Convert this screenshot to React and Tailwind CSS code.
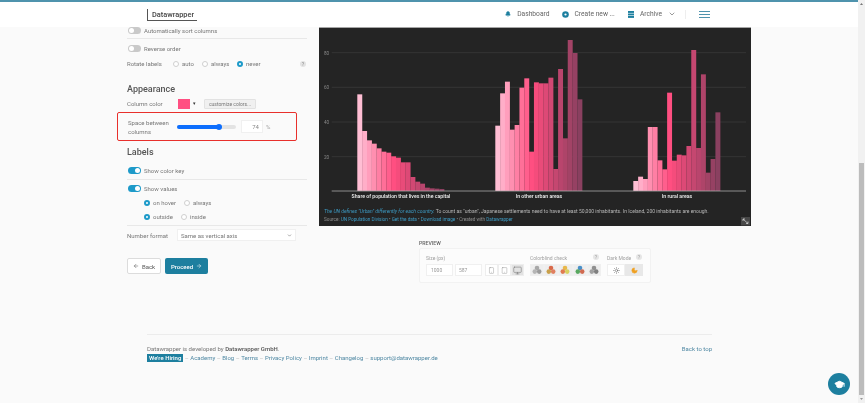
import React from "react";
import { ChevronDown, ArrowLeft, ArrowRight, Smartphone, Tablet, Monitor, Sun, Moon, GraduationCap, Bell } from "lucide-react";

const g1 = [208,318,346,356,370,380,383,394,398,412,412,456,470,476,488,490,491,492];
const g2 = [302,205,170,314,300,188,160,380,172,175,175,158,432,132,340,45,84,223];
const g3 = [468,455,462,306,306,406,433,203,407,389,391,363,75,369,148,443,402,262];

function mix(a, b, t) {
  return a.map((v, i) => Math.round(v + (b[i] - v) * t));
}
function color(i) {
  const t = i / 17;
  const c = t < 0.42 ? mix([255, 190, 212], [255, 77, 127], t / 0.42) : mix([255, 77, 127], [138, 64, 96], (t - 0.42) / 0.58);
  return `rgb(${c[0]},${c[1]},${c[2]})`;
}

function Group({ data, x0 }) {
  return data.map((top, i) => {
    const y = 25 + top / 3 - 27;
    return <rect key={i} x={x0 + i * 4.83} y={y} width={4.95} height={164 - y} fill={color(i)} />;
  });
}

function Chart() {
  return (
    <svg viewBox="0 0 432 199" className="block w-[432px] h-[199px]">
      <rect x="0" y="0" width="432" height="0.9" fill="#b5b5b5" />
      {[[25.7, "80"], [60.3, "60"], [95, "40"], [129.7, "20"]].map(([y, l]) => (
        <g key={l}>
          <line x1="12.7" x2="427" y1={y} y2={y} stroke="#3a3a3a" strokeWidth="0.8" />
          <text x="5" y={y + 2} fontSize="4.6" fill="#8a8a8a" fontFamily="Roboto, sans-serif">{l}</text>
        </g>
      ))}
      <Group data={g1} x0={38.3} />
      <Group data={g2} x0={176.3} />
      <Group data={g3} x0={314.3} />
      <line x1="12.7" x2="427" y1="164" y2="164" stroke="#aaaaaa" strokeWidth="0.8" />
      <g fontFamily="Roboto, sans-serif" fontSize="5.2" fontWeight="500" fill="#f0f0f0" textAnchor="middle">
        <text x="82" y="171">Share of population that lives in the capital</text>
        <text x="220" y="171">In other urban areas</text>
        <text x="358" y="171">In rural areas</text>
      </g>
      <text x="5" y="186" fontSize="5.02" fontFamily="Roboto, sans-serif" fill="#b8b8b8">
        <tspan fill="#3d9bc4" fontStyle="italic">The UN defines "Urban" differently for each country.</tspan>
        <tspan> To count as "urban", Japanese settlements need to have at least 50,000 inhabitants. In Iceland, 200 inhabitants are enough.</tspan>
      </text>
      <text x="5" y="194" fontSize="4.65" fontFamily="Roboto, sans-serif" fill="#8f8f8f">
        Source: <tspan fill="#3d9bc4">UN Population Division</tspan> • <tspan fill="#3d9bc4">Get the data</tspan> • <tspan fill="#3d9bc4">Download image</tspan> • Created with <tspan fill="#3d9bc4">Datawrapper</tspan>
      </text>
      <rect x="422" y="190" width="9" height="8.5" fill="#484848" />
      <path d="M424 192l5 4.5M424 192h2M424 192v2M429 196.500h-2M429 196.500v-2" stroke="#dddddd" strokeWidth="0.7" fill="none" />
    </svg>
  );
}

function Toggle({ on }) {
  return (
    <span className={`relative inline-block w-[13px] h-[7px] rounded-full shrink-0 ${on ? "bg-[#1d9ac9]" : "bg-[#c9c9c9]"}`}>
      <span className={`absolute top-[1px] w-[5px] h-[5px] rounded-full bg-white ${on ? "right-[1px]" : "left-[1px]"}`} />
    </span>
  );
}

function Radio({ on, label, w }) {
  return (
    <span className={`flex items-center gap-[3px] ${w}`}>
      <span className={`w-[6px] h-[6px] rounded-full shrink-0 bg-white ${on ? "border-[2px] border-[#1d9ac9]" : "border border-[#cfcfcf]"}`} />
      <span>{label}</span>
    </span>
  );
}

function Divider() {
  return <div className="h-px bg-[#e8e8e8]" />;
}

function Sidebar() {
  return (
    <div className="w-[180px] ml-[127px] text-[6px] leading-[9px] text-[#777777]">
      <div className="flex items-center gap-[3px] h-[9px] pl-px -mt-[1px]"><Toggle /><span>Automatically sort columns</span></div>
      <div className="mt-[3px]"><Divider /></div>
      <div className="flex items-center gap-[3px] h-[9px] pl-px mt-[5px]"><Toggle /><span>Reverse order</span></div>
      <div className="flex items-center h-[9px] mt-[6px]">
        <span className="w-[46px]">Rotate labels</span>
        <Radio label="auto" w="w-[29px]" />
        <Radio label="always" w="w-[35px]" />
        <Radio on label="never" w="w-[63px]" />
        <span className="w-[6px] h-[6px] rounded-full bg-[#e3e3e3] text-[5px] leading-[6px] text-center text-[#8a8a8a]">?</span>
      </div>
      <div className="text-[9px] leading-[11px] font-medium text-[#555555] mt-[16px]">Appearance</div>
      <div className="flex items-center h-[11px] mt-[3px]">
        <span className="w-[51px]">Column color</span>
        <span className="w-[12px] h-[10px] bg-[#ff4f82]" />
        <span className="w-[9px] text-[5px] text-center text-[#333333]">▾</span>
        <span className="ml-[5px] w-[52px] h-[10px] bg-[#f0f0f0] border border-[#e2e2e2] rounded-[1px] text-[5px] leading-[8px] text-center text-[#777777]">customize colors...</span>
      </div>
      <div className="relative flex items-center h-[29px] mt-[3px] -ml-[10px] w-[180px] border-[1.5px] border-[#e8302c] rounded-[2px] pl-[10px]">
        <span className="w-[49px] leading-[9px]">Space between columns</span>
        <span className="relative w-[59px] h-[4px] rounded-full bg-[#e3e3e3]">
          <span className="absolute left-0 top-0 h-[4px] w-[42px] rounded-full bg-[#0d6efd]" />
          <span className="absolute left-[39px] -top-[1px] w-[6px] h-[6px] rounded-full bg-[#0d6efd]" />
        </span>
        <span className="ml-[5px] w-[22px] h-[13px] bg-white border border-[#f0f0f0] text-right pr-[3px] leading-[11px] text-[#888888]">74</span>
        <span className="ml-[3px] text-[#a8a8a8]">%</span>
      </div>
      <div className="text-[9px] leading-[11px] font-medium text-[#555555] mt-[6px]">Labels</div>
      <div className="flex items-center gap-[3px] h-[9px] pl-px mt-[8px]"><Toggle on /><span>Show color key</span></div>
      <div className="mt-[4px]"><Divider /></div>
      <div className="flex items-center gap-[3px] h-[9px] pl-px mt-[4px]"><Toggle on /><span>Show values</span></div>
      <div className="flex items-center h-[9px] pl-[17px] mt-[5px]">
        <Radio on label="on hover" w="w-[40px]" /><Radio label="always" w="w-[40px]" />
      </div>
      <div className="flex items-center h-[9px] pl-[17px] mt-[5px]">
        <Radio on label="outside" w="w-[37px]" /><Radio label="inside" w="w-[40px]" />
      </div>
      <div className="mt-[4px]"><Divider /></div>
      <div className="flex items-center mt-[3px]">
        <span className="w-[50px]">Number format</span>
        <span className="w-[119px] h-[12px] bg-white border border-[#f0f0f0] flex items-center justify-between px-[3px]">
          <span>Same as vertical axis</span>
          <ChevronDown size={5} strokeWidth={3} />
        </span>
      </div>
      <div className="flex gap-[4px] mt-[17px]">
        <span className="w-[34px] h-[16px] bg-white border border-[#dcdcdc] rounded-[2px] flex items-center justify-center gap-[3px] text-[#555555]">
          <ArrowLeft size={6} />Back
        </span>
        <span className="w-[43px] h-[16px] bg-[#1d7f9f] rounded-[2px] flex items-center justify-center gap-[3px] text-white font-medium">
          Proceed<ArrowRight size={6} />
        </span>
      </div>
    </div>
  );
}

function Btn({ children, active }) {
  return <span className={`w-[13px] h-[12px] border border-[#eeeeee] flex items-center justify-center ${active ? "bg-[#e2e2e2]" : "bg-white"}`}>{children}</span>;
}

function Dot({ colors }) {
  return (
    <span className="w-[14.2px] h-[12px] bg-[#eeeeee] border border-[#f0f0f0] flex items-center justify-center">
      <svg width="10" height="10" viewBox="0 0 10 10">
        <circle cx="5" cy="3" r="2.3" fill={colors[0]} />
        <circle cx="2.8" cy="6.600" r="2.3" fill={colors[1]} />
        <circle cx="7.200" cy="6.600" r="2.3" fill={colors[2]} />
      </svg>
    </span>
  );
}

function Preview() {
  return (
    <div className="ml-[100px] mt-[13px] text-[5px] leading-[8px] text-[#a0a0a0]">
      <div className="text-[5.2px] font-medium text-[#666666]">PREVIEW</div>
      <div className="mt-[1px] w-[232px] h-[35px] bg-[#fcfcfc] border border-[#f2f2f2] rounded-[2px] pl-[6px] pt-[5px] flex">
        <div className="w-[104px]">
          <div>Size (px)</div>
          <div className="flex mt-[2px]">
            <span className="w-[27px] h-[12px] bg-white border border-[#f0f0f0] leading-[10px] pl-[4px] text-[#999999]">1000</span>
            <span className="ml-[2px] w-[27px] h-[12px] bg-white border border-[#f0f0f0] leading-[10px] pl-[3px] text-[#999999]">587</span>
            <span className="ml-[3px] flex text-[#777777]">
              <Btn><Smartphone size={7} strokeWidth={1.2} /></Btn>
              <Btn><Tablet size={7} strokeWidth={1.2} /></Btn>
              <Btn active><Monitor size={9} strokeWidth={1.5} /></Btn>
            </span>
          </div>
        </div>
        <div className="w-[71px]">
          <div className="flex justify-between pr-[2px]"><span>Colorblind check</span><span className="w-[6px] h-[6px] rounded-full bg-[#e6e6e6] text-center leading-[6px]">?</span></div>
          <div className="flex mt-[2px]">
            <Dot colors={["#a8a8a8", "#b5b5b5", "#9a9a9a"]} />
            <Dot colors={["#d9694a", "#c9a04a", "#e08060"]} />
            <Dot colors={["#e8b84a", "#e07a50", "#d8d060"]} />
            <Dot colors={["#4a90c8", "#58a860", "#d06a50"]} />
            <Dot colors={["#909090", "#a0a0a0", "#808080"]} />
          </div>
        </div>
        <div className="ml-[6px] w-[36px]">
          <div className="flex justify-between pr-[1px]"><span>Dark Mode</span><span className="w-[6px] h-[6px] rounded-full bg-[#e6e6e6] text-center leading-[6px]">?</span></div>
          <div className="flex mt-[2px]">
            <span className="w-[18px] h-[12px] bg-white border border-[#f0f0f0] flex items-center justify-center text-[#666666]"><Sun size={7} /></span>
            <span className="w-[18px] h-[12px] bg-[#e8e8e8] flex items-center justify-center text-[#f0a020]"><Moon size={7} fill="#f0a020" /></span>
          </div>
        </div>
      </div>
    </div>
  );
}

function Header() {
  return (
    <header className="h-[27px] shrink-0 bg-white border-t-[2px] border-t-[#4f93ad] flex items-center text-[6.7px] text-[#666666]">
      <div className="ml-[147px] h-[12px] border-l border-b border-[#555555] pl-[4px] text-[7.4px] leading-[11px] font-medium text-[#444444] w-[50px]">Datawrapper</div>
      <div className="ml-auto flex items-center mr-[148px]">
        <Bell size={6} className="text-[#1d7f9f]" fill="#1d7f9f" />
        <span className="ml-[6px]">Dashboard</span>
        <svg width="7" height="7" viewBox="0 0 7 7" className="ml-[12px]"><circle cx="3.500" cy="3.500" r="3.300" fill="#1d7f9f" /><circle cx="3.500" cy="3.500" r="1.100" fill="#ffffff" /></svg>
        <span className="ml-[6px]">Create new ...</span>
        <svg width="6" height="7" viewBox="0 0 6 7" className="ml-[13px]"><rect y="0" width="6" height="1.900" fill="#1d7f9f" /><rect y="2.500" width="6" height="1.900" fill="#1d7f9f" /><rect y="5" width="6" height="1.900" fill="#1d7f9f" /></svg>
        <span className="ml-[6px]">Archive</span>
        <ChevronDown size={8} className="ml-[6px]" />
        <span className="ml-[9px] w-px h-[9px] bg-[#eeeeee]" />
        <span className="ml-[13px] flex flex-col gap-[2px] w-[11px]">
          <span className="h-px bg-[#4f93ad]" /><span className="h-px bg-[#4f93ad]" /><span className="h-px bg-[#4f93ad]" />
        </span>
      </div>
    </header>
  );
}

function Footer() {
  const links = ["Academy", "Blog", "Terms", "Privacy Policy", "Imprint", "Changelog", "support@datawrapper.de"];
  return (
    <footer className="ml-[147px] mr-[146px] mt-[51px] border-t border-[#ececec] pt-[10px] flex justify-between text-[6px] leading-[8px] text-[#777777]">
      <div>
        <div>Datawrapper is developed by <b className="text-[#555555] font-medium">Datawrapper GmbH</b>.</div>
        <div className="flex items-center mt-px">
          <span className="bg-[#1d7f9f] text-white font-medium px-[2px] h-[8px] leading-[8px]">We're Hiring</span>
          {links.map((l) => (
            <span key={l} className="flex"><span className="mx-[1.500px] text-[#bbbbbb]">–</span><span className="text-[#4f88a3]">{l}</span></span>
          ))}
        </div>
      </div>
      <span className="text-[#4f88a3]">Back to top</span>
    </footer>
  );
}

function Scrollbar() {
  return (
    <div className="w-[7px] h-full bg-[#f1f1f1] flex flex-col items-center">
      <svg width="5" height="8" viewBox="0 0 5 8" className="shrink-0"><path d="M1 5h3L2.500 3z" fill="#777777" /></svg>
      <div className="w-[5px] mt-[155px] flex-1 bg-[#bcbcbc]" />
      <svg width="5" height="8" viewBox="0 0 5 8" className="shrink-0"><path d="M1 3h3L2.500 5z" fill="#999999" /></svg>
    </div>
  );
}

export default function App() {
  return (
    <div className="relative w-[865px] h-[403px] overflow-hidden bg-[#fafafa] flex blur-[0.3px]" style={{ fontFamily: "Roboto, sans-serif" }}>
      <div className="w-[858px] h-full flex flex-col">
        <Header />
        <div className="flex">
          <Sidebar />
          <div className="ml-[12px]">
            <div className="bg-[#242424]"><Chart /></div>
            <Preview />
          </div>
        </div>
        <Footer />
      </div>
      <Scrollbar />
      <span className="absolute left-[828px] top-[373px] w-[22px] h-[22px] rounded-full bg-[#1d7f9f] flex items-center justify-center text-white">
        <GraduationCap size={11} fill="#ffffff" />
      </span>
    </div>
  );
}
